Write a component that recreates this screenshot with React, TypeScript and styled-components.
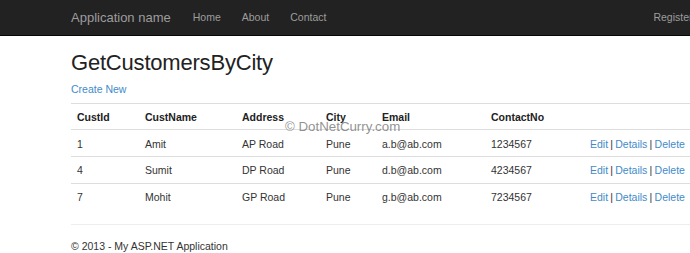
import React from 'react';
import styled, { createGlobalStyle } from 'styled-components';

const GlobalStyle = createGlobalStyle`
    html, body {
        margin: 0;
        padding: 0;
        overflow: hidden;
        background: #fff;
    }
    body {
        font-family: 'Liberation Sans', Arial, sans-serif;
        font-size: 10.5px;
        line-height: 15px;
        color: #333;
    }
`;

const Navbar = styled.nav`
    height: 36px;
    background: #222;
    border-bottom: 1px solid #080808;
    box-sizing: border-box;
`;

const NavInner = styled.div`
    width: 620px;
    margin-left: 71px;
    height: 100%;
    display: flex;
    align-items: center;
`;

const Brand = styled.a`
    font-size: 13px;
    color: #9d9d9d;
    margin-right: 11.5px;
    text-decoration: none;
`;

const NavLink = styled.a`
    padding: 0 10.5px;
    color: #9d9d9d;
    text-decoration: none;
    white-space: nowrap;
`;

const NavRight = styled.div`
    margin-left: auto;
    margin-right: -12px;
    display: flex;
    white-space: nowrap;
`;

const Main = styled.div`
    position: relative;
    width: 620px;
    margin-left: 71px;
    padding-top: 15.3px;
`;

const Title = styled.h2`
    margin: 0 0 6px;
    font-size: 22px;
    line-height: 24.2px;
    font-weight: 400;
    letter-spacing: -0.2px;
    color: #222;
`;

const Link = styled.a`
    color: #428bca;
    text-decoration: none;
`;

const Para = styled.p`
    margin: 0 0 6.4px;
`;

const Table = styled.table`
    width: 620px;
    border-collapse: collapse;
    table-layout: fixed;
    margin-bottom: 15px;
`;

const Cell = styled.td<{ $head?: boolean }>`
    padding: 6.3px 6px 4.3px;
    border-top: 1px solid #ddd;
    text-align: left;
    white-space: nowrap;
    font-weight: ${(p) => (p.$head ? 700 : 400)};
    color: ${(p) => (p.$head ? '#222' : '#333')};
`;

const ActionCell = styled(Cell)`
    word-spacing: -0.7px;
`;

const Sep = styled.span`
    color: #333;
`;

const Rule = styled.hr`
    border: 0;
    border-top: 1px solid #eee;
    margin: 0 0 14px;
`;

const Footer = styled.footer`
    margin: 0;
`;

const Watermark = styled.div`
    position: absolute;
    left: 214px;
    top: 83px;
    font-size: 13.3px;
    line-height: 15px;
    color: rgba(125, 125, 125, 0.85);
    pointer-events: none;
`;

const widths = [68, 97, 84, 56, 109, 99, 107];
const headers = ['CustId', 'CustName', 'Address', 'City', 'Email', 'ContactNo', ''];

const customers = [
    { id: 1, name: 'Amit', address: 'AP Road', city: 'Pune', email: 'a.b@ab.com', phone: '1234567' },
    { id: 4, name: 'Sumit', address: 'DP Road', city: 'Pune', email: 'd.b@ab.com', phone: '4234567' },
    { id: 7, name: 'Mohit', address: 'GP Road', city: 'Pune', email: 'g.b@ab.com', phone: '7234567' },
];

function App(): JSX.Element {
    return (
        <>
            <GlobalStyle />
            <Navbar>
                <NavInner>
                    <Brand href="#">Application name</Brand>
                    <NavLink href="#">Home</NavLink>
                    <NavLink href="#">About</NavLink>
                    <NavLink href="#">Contact</NavLink>
                    <NavRight>
                        <NavLink href="#">Register</NavLink>
                    </NavRight>
                </NavInner>
            </Navbar>
            <Main>
                <Title>GetCustomersByCity</Title>
                <Para>
                    <Link href="#">Create New</Link>
                </Para>
                <Table>
                    <colgroup>
                        {widths.map((w, i) => (
                            <col key={i} style={{ width: w }} />
                        ))}
                    </colgroup>
                    <tbody>
                        <tr>
                            {headers.map((h, i) => (
                                <Cell as="th" $head key={i}>
                                    {h}
                                </Cell>
                            ))}
                        </tr>
                        {customers.map((c) => (
                            <tr key={c.id}>
                                <Cell>{c.id}</Cell>
                                <Cell>{c.name}</Cell>
                                <Cell>{c.address}</Cell>
                                <Cell>{c.city}</Cell>
                                <Cell>{c.email}</Cell>
                                <Cell>{c.phone}</Cell>
                                <ActionCell>
                                    <Link href="#">Edit</Link> <Sep>|</Sep> <Link href="#">Details</Link>{' '}
                                    <Sep>|</Sep> <Link href="#">Delete</Link>
                                </ActionCell>
                            </tr>
                        ))}
                    </tbody>
                </Table>
                <Rule />
                <Footer>
                    <Para>© 2013 - My ASP.NET Application</Para>
                </Footer>
                <Watermark>© DotNetCurry.com</Watermark>
            </Main>
        </>
    );
}

export default App;
